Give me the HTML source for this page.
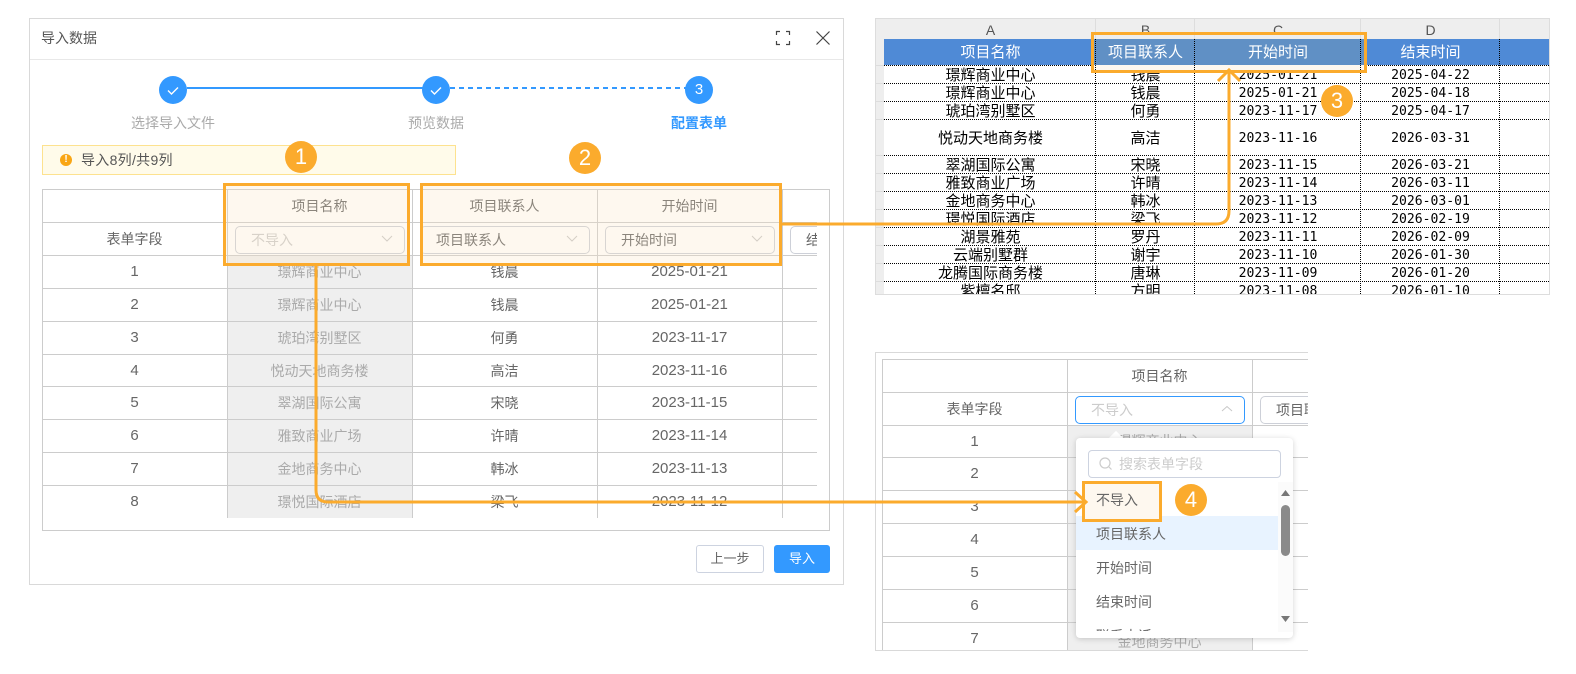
<!DOCTYPE html>
<html lang="zh-CN"><head><meta charset="utf-8"><title>导入数据</title>
<style>
*{box-sizing:border-box;margin:0;padding:0}
html,body{width:1576px;height:674px;background:#fff;overflow:hidden}
body{position:relative;font-family:"Liberation Sans","Noto Sans CJK SC",sans-serif;font-size:14px;color:#666}
.a{position:absolute}
.t{position:absolute;white-space:nowrap;text-align:center}
.r{position:absolute;left:0;width:775px;height:33px;border-top:1px solid #ccc;line-height:32px}
.r span{position:absolute;text-align:center;white-space:nowrap}
.n{left:0;width:185px;font-size:15px}
.g{left:185px;width:185px;color:#aaa}
.u{left:370px;width:185px}
.d{left:555px;width:185px;font-size:15px}
.v{position:absolute;width:1px;background:#ccc}
.h{position:absolute;height:1px;background:#ccc}
.sel{position:absolute;height:28px;border:1px solid #cdd0d8;border-radius:5px;line-height:26px;white-space:nowrap;overflow:hidden;color:#666}
.box{position:absolute;border:3px solid #fbab2d}
.b{position:absolute;width:32px;height:32px;border-radius:50%;background:#fbab2d;color:#fff;font-size:22px;line-height:32px;text-align:center}
.x{position:absolute;left:8px;height:18px;width:665px;border-top:1px dotted #000;color:#000;font-size:15px;overflow:hidden;font-family:"Liberation Sans","WenQuanYi Zen Hei","Noto Sans CJK SC",sans-serif}
.x span{position:absolute;top:0;line-height:20px;text-align:center;white-space:nowrap}
.x .m{font-family:"DejaVu Sans Mono",monospace;font-size:13.1px}
.c1{left:1px;width:211px}.c2{left:212px;width:99px}.c3{left:311px;width:166px}.c4{left:477px;width:139px}
.o{position:absolute;left:0;width:217px;height:34px;line-height:36px;padding-left:20px;color:#666}
.p{position:absolute;height:33px;width:431px;left:0;border-top:1px solid #ccc}
.p span{position:absolute;left:0;width:185px;text-align:center;line-height:32px;font-size:15px}
.q{position:absolute;left:876px;width:8px;height:1px;background:#ddd}
</style></head><body>

<!-- dialog -->
<div class="a" style="left:29px;top:18px;width:815px;height:567px;border:1px solid #d9d9d9"></div>
<div class="a" style="left:30px;top:59px;width:813px;height:1px;background:#e8e8e8"></div>
<div class="t" style="left:41px;top:28px;line-height:20px;color:#555;font-size:14px">导入数据</div>
<svg class="a" style="left:775px;top:30px" width="16" height="16" viewBox="0 0 16 16" fill="none" stroke="#444" stroke-width="1.2"><path d="M1.5 5V1.5H5M11 1.5H14.5V5M14.5 11V14.5H11M5 14.5H1.5V11"/></svg>
<svg class="a" style="left:815px;top:30px" width="16" height="16" viewBox="0 0 16 16" fill="none" stroke="#444" stroke-width="1.2"><path d="M1.5 1.5L14.5 14.5M14.5 1.5L1.5 14.5"/></svg>

<!-- stepper -->
<div class="a" style="left:187px;top:87px;width:236px;height:2px;background:#3399ff"></div>
<svg class="a" style="left:450px;top:87px" width="236" height="2"><path d="M0 1H236" stroke="#3399ff" stroke-width="2" stroke-dasharray="5 4"/></svg>
<div class="a" style="left:159px;top:76px;width:28px;height:28px;border-radius:50%;background:#3399ff"></div>
<div class="a" style="left:422px;top:76px;width:28px;height:28px;border-radius:50%;background:#3399ff"></div>
<div class="a" style="left:685px;top:76px;width:28px;height:28px;border-radius:50%;background:#3399ff;color:#fff;text-align:center;line-height:27px;font-size:15px">3</div>
<svg class="a" style="left:159px;top:76px" width="28" height="28" fill="none" stroke="#fff" stroke-width="1.4"><path d="M9 14.500L12.500 18L19 11.500"/></svg>
<svg class="a" style="left:422px;top:76px" width="28" height="28" fill="none" stroke="#fff" stroke-width="1.4"><path d="M9 14.500L12.500 18L19 11.500"/></svg>
<div class="t" style="left:73px;width:200px;top:113px;line-height:20px;color:#aaa">选择导入文件</div>
<div class="t" style="left:336px;width:200px;top:113px;line-height:20px;color:#aaa">预览数据</div>
<div class="t" style="left:599px;width:200px;top:113px;line-height:20px;color:#3399ff;font-weight:700">配置表单</div>

<!-- alert -->
<div class="a" style="left:42px;top:145px;width:414px;height:30px;background:#fffbea;border:1px solid #fde28f"></div>
<div class="a" style="left:60px;top:154px;width:12px;height:12px;border-radius:50%;background:#f9a614;color:#fff;font-size:10px;line-height:12px;text-align:center;font-weight:700">!</div>
<div class="t" style="left:81px;top:150px;line-height:20px;color:#555;letter-spacing:.3px">导入8列/共9列</div>

<!-- main table -->
<div class="a" style="left:42px;top:189px;width:788px;height:342px;border:1px solid #ccc"></div>
<div class="a" style="left:227px;top:255px;width:186px;height:263px;background:#efefef"></div>
<div class="a" style="left:42px;top:189px;width:775px;height:329px;overflow:hidden">
  <div class="v" style="left:185px;top:0;height:329px"></div>
  <div class="v" style="left:370px;top:0;height:329px"></div>
  <div class="v" style="left:555px;top:0;height:329px"></div>
  <div class="v" style="left:740px;top:0;height:329px"></div>
  <div class="h" style="left:0;top:33px;width:775px"></div>
  <div class="t" style="left:185px;width:185px;top:7px;line-height:20px">项目名称</div>
  <div class="t" style="left:370px;width:185px;top:7px;line-height:20px">项目联系人</div>
  <div class="t" style="left:555px;width:185px;top:7px;line-height:20px">开始时间</div>
  <div class="t" style="left:0;width:185px;top:40px;line-height:20px">表单字段</div>
  <div class="r" style="top:66px"><span class="n">1</span><span class="g">璟辉商业中心</span><span class="u">钱晨</span><span class="d">2025-01-21</span></div>
  <div class="r" style="top:99px"><span class="n">2</span><span class="g">璟辉商业中心</span><span class="u">钱晨</span><span class="d">2025-01-21</span></div>
  <div class="r" style="top:132px"><span class="n">3</span><span class="g">琥珀湾别墅区</span><span class="u">何勇</span><span class="d">2023-11-17</span></div>
  <div class="r" style="top:165px"><span class="n">4</span><span class="g">悦动天地商务楼</span><span class="u">高洁</span><span class="d">2023-11-16</span></div>
  <div class="r" style="top:197px"><span class="n">5</span><span class="g">翠湖国际公寓</span><span class="u">宋晓</span><span class="d">2023-11-15</span></div>
  <div class="r" style="top:230px"><span class="n">6</span><span class="g">雅致商业广场</span><span class="u">许晴</span><span class="d">2023-11-14</span></div>
  <div class="r" style="top:263px"><span class="n">7</span><span class="g">金地商务中心</span><span class="u">韩冰</span><span class="d">2023-11-13</span></div>
  <div class="r" style="top:296px"><span class="n">8</span><span class="g">璟悦国际酒店</span><span class="u">梁飞</span><span class="d">2023-11-12</span></div>
  <div class="sel" style="left:193px;top:37px;width:170px;padding-left:15px;color:#ccc">不导入</div>
  <div class="sel" style="left:378px;top:37px;width:170px;padding-left:15px">项目联系人</div>
  <div class="sel" style="left:563px;top:37px;width:170px;padding-left:15px">开始时间</div>
  <div class="sel" style="left:748px;top:37px;width:60px;padding-left:15px">结束时间</div>
</div>
<svg class="a" style="left:0;top:0" width="800" height="260" fill="none" stroke="#c8c8c8" stroke-width="1"><path d="M382 236L387 241L392 236M567 236L572 241L577 236M752 236L757 241L762 236"/></svg>
<div class="a" style="left:226px;top:186px;width:181px;height:77px;background:rgba(252,228,192,.25)"></div>
<div class="a" style="left:423px;top:186px;width:356px;height:77px;background:rgba(252,228,192,.25)"></div>
<div class="box" style="left:223px;top:183px;width:187px;height:83px"></div>
<div class="box" style="left:420px;top:183px;width:362px;height:83px"></div>

<!-- buttons -->
<div class="a" style="left:696px;top:545px;width:68px;height:28px;border:1px solid #cdd3e0;border-radius:3px;text-align:center;line-height:26px;font-size:13px;color:#666">上一步</div>
<div class="a" style="left:774px;top:545px;width:56px;height:28px;background:#3399ff;border-radius:3px;text-align:center;line-height:27px;font-size:13px;color:#fff">导入</div>

<!-- excel -->
<div class="a" style="left:875px;top:18px;width:675px;height:277px;border:1px solid #ddd;overflow:hidden;background:#fff">
  <div class="a" style="left:0;top:0;width:673px;height:20px;background:#eee"></div>
  <div class="a" style="left:0;top:0;width:8px;height:275px;background:#eee"></div>
  <div class="x" style="top:46px"><span class="c1">璟辉商业中心</span><span class="c2">钱晨</span><span class="c3 m">2025-01-21</span><span class="c4 m">2025-04-22</span></div>
  <div class="x" style="top:64px"><span class="c1">璟辉商业中心</span><span class="c2">钱晨</span><span class="c3 m">2025-01-21</span><span class="c4 m">2025-04-18</span></div>
  <div class="x" style="top:82px"><span class="c1">琥珀湾别墅区</span><span class="c2">何勇</span><span class="c3 m">2023-11-17</span><span class="c4 m">2025-04-17</span></div>
  <div class="x" style="top:100px;height:36px"><span class="c1" style="line-height:37px">悦动天地商务楼</span><span class="c2" style="line-height:37px">高洁</span><span class="c3 m" style="line-height:37px">2023-11-16</span><span class="c4 m" style="line-height:37px">2026-03-31</span></div>
  <div class="x" style="top:136px"><span class="c1">翠湖国际公寓</span><span class="c2">宋晓</span><span class="c3 m">2023-11-15</span><span class="c4 m">2026-03-21</span></div>
  <div class="x" style="top:154px"><span class="c1">雅致商业广场</span><span class="c2">许晴</span><span class="c3 m">2023-11-14</span><span class="c4 m">2026-03-11</span></div>
  <div class="x" style="top:172px"><span class="c1">金地商务中心</span><span class="c2">韩冰</span><span class="c3 m">2023-11-13</span><span class="c4 m">2026-03-01</span></div>
  <div class="x" style="top:190px"><span class="c1">璟悦国际酒店</span><span class="c2">梁飞</span><span class="c3 m">2023-11-12</span><span class="c4 m">2026-02-19</span></div>
  <div class="x" style="top:208px"><span class="c1">湖景雅苑</span><span class="c2">罗丹</span><span class="c3 m">2023-11-11</span><span class="c4 m">2026-02-09</span></div>
  <div class="x" style="top:226px"><span class="c1">云端别墅群</span><span class="c2">谢宇</span><span class="c3 m">2023-11-10</span><span class="c4 m">2026-01-30</span></div>
  <div class="x" style="top:244px"><span class="c1">龙腾国际商务楼</span><span class="c2">唐琳</span><span class="c3 m">2023-11-09</span><span class="c4 m">2026-01-20</span></div>
  <div class="x" style="top:262px"><span class="c1">紫檀名邸</span><span class="c2">方明</span><span class="c3 m">2023-11-08</span><span class="c4 m">2026-01-10</span></div>
  <div class="a" style="left:8px;top:20px;width:665px;height:26px;background:#4f8ad6;color:#fff;font-size:15px;line-height:27px;font-family:'Liberation Sans','WenQuanYi Zen Hei','Noto Sans CJK SC',sans-serif">
    <span class="a" style="left:1px;width:211px;text-align:center">项目名称</span>
    <span class="a" style="left:212px;width:99px;text-align:center">项目联系人</span>
    <span class="a" style="left:311px;width:166px;text-align:center">开始时间</span>
    <span class="a" style="left:477px;width:139px;text-align:center">结束时间</span>
  </div>
  <div class="a" style="left:215px;top:20px;width:275px;height:26px;background:#6090c5;color:#fff;font-size:15px;line-height:27px;font-family:'Liberation Sans','WenQuanYi Zen Hei','Noto Sans CJK SC',sans-serif">
    <span class="a" style="left:5px;width:99px;text-align:center">项目联系人</span>
    <span class="a" style="left:104px;width:166px;text-align:center">开始时间</span>
  </div>
  <div class="a" style="left:215px;top:46px;width:275px;height:8px;background:#fef8ef"></div>
  <svg class="a" style="left:0;top:0" width="673" height="275"><path d="M219.500 20V275M318.500 20V275M484.500 20V275M623.500 20V275" stroke="#000" stroke-width="1" stroke-dasharray="1 1"/><path d="M219.500 0V20M318.500 0V20M484.500 0V20M623.500 0V20" stroke="#ddd"/></svg>
  <div class="t" style="left:9px;width:211px;top:1px;line-height:20px;color:#555;font-size:14px">A</div>
  <div class="t" style="left:220px;width:99px;top:1px;line-height:20px;color:#555;font-size:14px">B</div>
  <div class="t" style="left:319px;width:166px;top:1px;line-height:20px;color:#555;font-size:14px">C</div>
  <div class="t" style="left:485px;width:139px;top:1px;line-height:20px;color:#555;font-size:14px">D</div>
</div>
<div class="q" style="top:65px"></div><div class="q" style="top:83px"></div><div class="q" style="top:101px"></div><div class="q" style="top:119px"></div><div class="q" style="top:155px"></div><div class="q" style="top:173px"></div><div class="q" style="top:191px"></div><div class="q" style="top:209px"></div><div class="q" style="top:227px"></div><div class="q" style="top:245px"></div><div class="q" style="top:263px"></div><div class="q" style="top:281px"></div>
<div class="box" style="left:1091px;top:32px;width:276px;height:41px"></div>

<!-- panel 3 -->
<div class="a" style="left:875px;top:352px;width:433px;height:299px;border:1px solid #d9d9d9;border-right:0"></div>
<div class="a" style="left:1067px;top:425px;width:185px;height:225px;background:#efefef"></div>
<div class="a" style="left:882px;top:359px;width:426px;height:291px;overflow:hidden">
  <div class="a" style="left:0;top:0;width:426px;height:291px;border:1px solid #ccc;border-right:0;border-bottom:0"></div>
  <div class="v" style="left:185px;top:0;height:291px"></div>
  <div class="v" style="left:370px;top:0;height:291px"></div>
  <div class="h" style="left:0;top:33px;width:426px"></div>
  <div class="t" style="left:185px;width:185px;top:7px;line-height:20px">项目名称</div>
  <div class="t" style="left:0;width:185px;top:40px;line-height:20px">表单字段</div>
  <div class="p" style="top:66px"><span>1</span></div>
  <div class="p" style="top:98px"><span>2</span></div>
  <div class="p" style="top:131px"><span>3</span></div>
  <div class="p" style="top:164px"><span>4</span></div>
  <div class="p" style="top:197px"><span>5</span></div>
  <div class="p" style="top:230px"><span>6</span></div>
  <div class="p" style="top:263px"><span>7</span></div>
  <div class="t" style="left:185px;width:185px;top:273px;line-height:20px;color:#aaa">金地商务中心</div>
  <div class="t" style="left:185px;width:185px;top:72px;line-height:20px;color:#aaa">璟辉商业中心</div>
  <div class="sel" style="left:193px;top:37px;width:170px;padding-left:15px;color:#ccc;border-color:#3399ff">不导入</div>
  <div class="sel" style="left:378px;top:37px;width:100px;padding-left:15px">项目联系人</div>
</div>
<svg class="a" style="left:1220px;top:404px" width="14" height="10" fill="none" stroke="#c8c8c8"><path d="M2 7L7 2.500L12 7"/></svg>

<!-- popup -->
<div class="a" style="left:1111px;top:433px;width:10px;height:10px;background:#fff;transform:rotate(45deg)"></div>
<div class="a" style="left:1076px;top:438px;width:217px;height:200px;background:#fff;border-radius:4px;box-shadow:0 1px 6px rgba(0,0,0,.18);overflow:hidden">
  <div class="a" style="left:12px;top:12px;width:193px;height:28px;border:1px solid #cdd3e0;border-radius:4px;line-height:26px;padding-left:30px;color:#ccc;font-size:14px">搜索表单字段</div>
  <svg class="a" style="left:22px;top:18px" width="16" height="16" fill="none" stroke="#ccc" stroke-width="1.2"><circle cx="7" cy="7" r="5"/><path d="M11 11L13.500 13.500"/></svg>
  <div class="a" style="left:0;top:78px;width:202px;height:34px;background:#e8f3ff"></div>
  <div class="o" style="top:78px">项目联系人</div>
  <div class="o" style="top:112px">开始时间</div>
  <div class="o" style="top:146px">结束时间</div>
  <div class="a" style="left:0;top:180px;width:217px;height:13px;overflow:hidden"><div class="o" style="top:0">联系电话</div></div>
  <div class="a" style="left:202px;top:44px;width:15px;height:150px;background:#fbfbfb"></div>
  <div class="a" style="left:205px;top:67px;width:9px;height:51px;background:#8a8a8a;border-radius:5px"></div>
  <svg class="a" style="left:202px;top:44px" width="15" height="150" fill="#777"><path d="M3 14H12L7.500 8ZM3 134H12L7.500 140Z"/></svg>
</div>
<div class="a" style="left:1082px;top:481px;width:80px;height:41px;background:#fef8ef;border:3px solid #fbab2d;line-height:33px;padding-left:11px;color:#666;font-size:14px">不导入</div>

<!-- arrows -->
<svg class="a" style="left:0;top:0" width="1576" height="674" fill="none" stroke="#fbab2d" stroke-width="3">
  <path d="M316 266V490Q316 502 328 502H1086"/>
  <path d="M1075 492L1086 502L1075 512"/>
  <path d="M782 224H1216Q1229 224 1229 211V71"/>
  <path d="M1218 81L1229 70L1240 81"/>
</svg>

<!-- badges -->
<div class="b" style="left:285px;top:141px">1</div>
<div class="b" style="left:569px;top:142px">2</div>
<div class="b" style="left:1321px;top:85px">3</div>
<div class="b" style="left:1175px;top:484px">4</div>
</body></html>
